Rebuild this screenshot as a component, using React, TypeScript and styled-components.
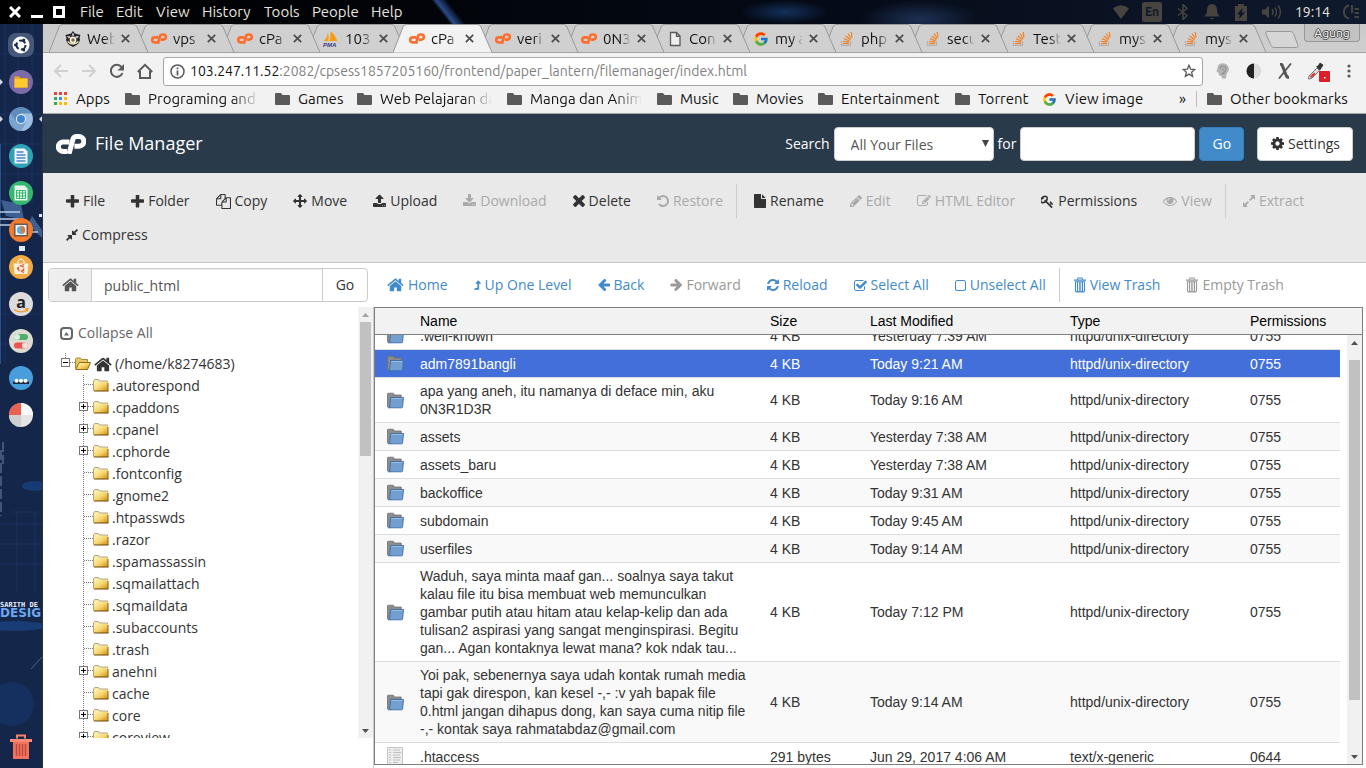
import React, { useLayoutEffect, useRef } from "react";
import styled, { createGlobalStyle, css } from "styled-components";
import { FcGoogle } from "react-icons/fc";

const system = `Ubuntu, "Noto Sans", "Open Sans", sans-serif`;
const panel = `"Open Sans", "Noto Sans", sans-serif`;
const grid = `"Liberation Sans", Arial, sans-serif`;

const GlobalStyle = createGlobalStyle`
  *, *::before, *::after { box-sizing: border-box; }
  html, body { margin: 0; height: 100%; overflow: hidden; }
  body { background: #fff; font: 14px/20px ${panel}; color: #333; }
  button, input, select { font: inherit; color: inherit; margin: 0; }
  button { background: none; border: 0; padding: 0; }
  a { color: inherit; text-decoration: none; }
  svg { display: block; flex: none; }
  #root { height: 100%; }
`;

/* ---------- Desktop shell ---------- */

const Desktop = styled.div`
  display: flex;
  flex-direction: column;
  height: 100vh;
`;

const MenuBar = styled.header`
  flex: none;
  display: flex;
  align-items: center;
  height: 24px;
  padding: 0 7px 0 9px;
  font: 15px/24px ${system};
  color: #e6e4df;
  background:
    linear-gradient(52deg, transparent 32%, #2b4b86 34%, #14264c 37%, transparent 39%) 380px 0 / 200px 24px no-repeat,
    radial-gradient(ellipse at 50% 80%, #1c3054 0, transparent 70%) 860px 0 / 120px 24px no-repeat,
    radial-gradient(ellipse at 50% 50%, #14305c 0, transparent 70%) 740px 0 / 90px 24px no-repeat,
    linear-gradient(90deg, #000 0, #020409 30%, #040a16 60%, #101a2e 100%);
`;

const WindowButtons = styled.div`
  display: flex;
  align-items: center;
  gap: 10px;
  margin-right: 15px;
`;

const MenuItem = styled.button<{ $w: number }>`
  width: ${(p) => p.$w}px;
  text-align: left;
  line-height: 24px;
  white-space: nowrap;
`;

const Tray = styled.div`
  display: flex;
  align-items: center;
  gap: 13px;
  margin-left: auto;
  color: #47443f;
`;

const Lang = styled.span`
  width: 20px;
  height: 20px;
  border-radius: 2px;
  background: #47443f;
  color: #101828;
  font: 700 12px/20px ${system};
  text-align: center;
`;

const Clock = styled.time`
  color: #e6e4df;
  font-size: 14px;
`;

const Workspace = styled.div`
  flex: 1;
  min-height: 0;
  display: flex;
`;

const Launcher = styled.nav`
  position: relative;
  flex: none;
  width: 43px;
  display: flex;
  flex-direction: column;
  align-items: center;
  justify-content: space-between;
  padding: 9px 1px 8px 0;
  background: #14264a;
  border-right: 1px solid #2c2e38;
`;

const Wallpaper = styled.svg`
  position: absolute;
  inset: 0;
`;

const LaunchList = styled.div`
  position: relative;
  display: flex;
  flex-direction: column;
  gap: 13px;
`;

const LaunchButton = styled.button`
  width: 24px;
  height: 24px;
`;

const TrashButton = styled.button`
  position: relative;
`;

/* ---------- Browser ---------- */

const Browser = styled.div`
  flex: 1;
  min-width: 0;
  display: flex;
  flex-direction: column;
`;

const TabStrip = styled.div`
  flex: none;
  display: flex;
  align-items: flex-start;
  height: 29px;
  padding-left: 6px;
  background: linear-gradient(#cacaca, #cfcfcf);
  border-bottom: 1px solid #a0a0a0;
  font: 15px/28px ${system};
  color: #111;
`;

const Tab = styled.div<{ $z: number }>`
  position: relative;
  z-index: ${(p) => p.$z};
  flex: none;
  width: 86px;
  height: 29px;
  display: flex;
  align-items: center;
  gap: 6px;
  padding-left: 16px;
`;

const TabShape = styled.svg`
  position: absolute;
  left: 0;
  top: 0;
  z-index: -1;
`;

const fade = css`
  overflow: hidden;
  white-space: nowrap;
  mask-image: linear-gradient(90deg, #000 60%, transparent);
`;

const TabTitle = styled.span`
  width: 28px;
  ${fade}
`;

const NewTab = styled.button`
  margin: 7px 0 0 12px;
`;

const ProfileButton = styled.button`
  margin: 0 6px 0 auto;
  width: 56px;
  height: 18px;
  border: 1px solid #999;
  border-top: 0;
  border-radius: 0 0 4px 4px;
  background: #c2c2c2;
  color: #fff;
  font: 12px/16px ${system};
  text-shadow: 1px 0 #444, -1px 0 #444, 0 1px #444, 0 -1px #444;
`;

const AddressRow = styled.div`
  flex: none;
  display: flex;
  align-items: center;
  height: 36px;
  padding: 0 13px 0 10px;
  background: #f2f2f2;
`;

const NavButtons = styled.div`
  display: flex;
  gap: 12px;
  margin-right: 10px;
`;

const AddressBox = styled.div`
  flex: 1;
  display: flex;
  align-items: center;
  gap: 5px;
  height: 29px;
  padding: 0 6px;
  background: #fff;
  border: 1px solid #a6a6a6;
  border-radius: 3px;
  font: 14px/26px ${system};
  color: #808080;
`;

const Address = styled.div`
  flex: 1;
  white-space: nowrap;
  overflow: hidden;
`;

const Host = styled.span`
  color: #111;
`;

const Extensions = styled.div`
  display: flex;
  align-items: center;
  gap: 15px;
  margin-left: 12px;
`;

const Bookmarks = styled.div`
  flex: none;
  display: flex;
  align-items: center;
  height: 25px;
  padding: 0 14px 4px 10px;
  background: #f2f2f2;
  border-bottom: 1px solid #a3a9ad;
  font: 15px/20px ${system};
  color: #111;
`;

const Bookmark = styled.a<{ $w: number; $fade?: boolean }>`
  display: flex;
  align-items: center;
  gap: 8px;
  width: ${(p) => p.$w}px;
  flex: none;
  white-space: nowrap;
  span {
    ${(p) => p.$fade && css`width: 112px; ${fade} mask-image: linear-gradient(90deg, #000 75%, transparent);`}
  }
`;

const BookmarkEnd = styled.div`
  display: flex;
  align-items: center;
  gap: 10px;
  margin-left: auto;
`;

const BookmarkDivider = styled.span`
  width: 1px;
  height: 16px;
  background: #bbb;
`;

/* ---------- File manager ---------- */

const Page = styled.main`
  flex: 1;
  min-height: 0;
  display: flex;
  flex-direction: column;
  background: #fff;
`;

const TopBar = styled.div`
  flex: none;
  display: flex;
  align-items: center;
  height: 59px;
  padding: 0 13px;
  background: #293a4a;
  color: #fff;
`;

const Title = styled.h1`
  margin: 0 auto 0 9px;
  padding-bottom: 2px;
  font: 400 18px/24px ${panel};
`;

const SearchForm = styled.form`
  display: flex;
  align-items: center;
  gap: 4px;
`;

const field = css`
  height: 34px;
  border: 1px solid #ccc;
  border-radius: 4px;
  background: #fff;
  color: #555;
  outline: 0;
`;

const SelectWrap = styled.span`
  display: grid;
  align-items: center;
  width: 160px;
  & > * { grid-area: 1 / 1; }
  & > svg { justify-self: end; margin-right: 5px; }
`;

const Select = styled.select`
  ${field}
  appearance: none;
  padding: 2px 15px 0 16px;
`;

const SearchInput = styled.input`
  ${field}
  width: 175px;
  padding: 6px 12px;
`;

const Button = styled.button<{ $primary?: boolean }>`
  height: 34px;
  padding: 0 12px;
  display: flex;
  align-items: center;
  gap: 4px;
  border: 1px solid ${(p) => (p.$primary ? "#357ebd" : "#ccc")};
  border-radius: 4px;
  background: ${(p) => (p.$primary ? "#428bca" : "#fff")};
  color: ${(p) => (p.$primary ? "#fff" : "#333")};
`;

const Settings = styled(Button)`
  margin-left: 13px;
  padding: 0 12px 0 13px;
`;

const ToolBar = styled.div`
  flex: none;
  display: flex;
  flex-wrap: wrap;
  padding: 11px 10px 10px;
  background: #e9e9e9;
  border-bottom: 1px solid #c3c3c8;
`;

const Tool = styled.button<{ $link?: boolean }>`
  display: flex;
  align-items: center;
  gap: 4px;
  height: 34px;
  padding: 0 13px;
  white-space: nowrap;
  color: ${(p) => (p.$link ? "#428bca" : "#333")};
  &:disabled { color: ${(p) => (p.$link ? "#999" : "#aaa")}; }
`;

const Divider = styled.span<{ $tight?: boolean }>`
  width: 1px;
  height: 34px;
  background: #ccc;
  margin-right: ${(p) => (p.$tight ? 1 : 4)}px;
`;

const PathRow = styled.div`
  flex: none;
  display: flex;
  padding: 5px 5px;
`;

const PathForm = styled.form`
  display: flex;
  width: 320px;
  margin-right: 6px;
  border: 1px solid #ccc;
  border-radius: 4px;
  overflow: hidden;
`;

const PathHome = styled.button`
  display: grid;
  place-items: center;
  width: 43px;
  background: #eee;
  border-right: 1px solid #ccc;
  color: #555;
`;

const PathInput = styled.input`
  flex: 1;
  min-width: 0;
  height: 32px;
  border: 0;
  outline: 0;
  padding: 1px 12px 0;
  color: #555;
  box-shadow: inset 0 1px 1px rgba(0, 0, 0, 0.08);
`;

const PathGo = styled.button`
  width: 45px;
  border-left: 1px solid #ccc;
`;

const Columns = styled.div`
  flex: 1;
  min-height: 0;
  display: flex;
`;

const TreePane = styled.aside`
  flex: none;
  display: flex;
  width: 330px;
  margin-bottom: 30px;
`;

const TreeScroll = styled.div`
  flex: 1;
  overflow: hidden;
  padding: 15px 0 0 17px;
`;

const Collapse = styled.button`
  display: flex;
  align-items: center;
  gap: 5px;
  height: 22px;
  margin-bottom: 9px;
  color: #666;
`;

const TreeRow = styled.div<{ $root?: boolean }>`
  display: flex;
  align-items: center;
  height: 22px;
  gap: 3px;
  padding-left: ${(p) => (p.$root ? 1 : 19)}px;
`;

const Bar = styled.div`
  flex: none;
  width: 15px;
  display: flex;
  flex-direction: column;
  align-items: center;
  background: #f1f1f1;
`;

const Track = styled.div<{ $pad: number }>`
  flex: 1;
  width: 11px;
  padding-top: ${(p) => p.$pad}px;
`;

const Thumb = styled.div`
  background: #c1c1c1;
`;

const ListPane = styled.section`
  flex: 1;
  min-width: 0;
  display: flex;
  padding: 0 3px 3px 0;
  border-left: 1px solid #ccc;
`;

const Frame = styled.div`
  flex: 1;
  min-width: 0;
  display: flex;
  flex-direction: column;
  border: 1px solid #7f7f7f;
  font: 14px/18px ${grid};
`;

const HeadArea = styled.div`
  flex: none;
  background: #f2f2f2;
  border-bottom: 1px solid #7f7f7f;
  color: #000;
`;

const BodyArea = styled.div`
  flex: 1;
  min-height: 0;
  display: flex;
`;

const BodyScroll = styled.div`
  flex: 1;
  min-width: 0;
  overflow: hidden;
  padding-right: 7px;
`;

const Table = styled.table`
  width: 100%;
  table-layout: fixed;
  border-collapse: separate;
  border-spacing: 0;
`;

const Th = styled.th`
  height: 26px;
  padding: 0 10px 0 5px;
  font-weight: 400;
  text-align: left;
`;

const Tr = styled.tr<{ $selected?: boolean; $shade?: boolean }>`
  background: ${(p) => (p.$selected ? "#426fd9" : p.$shade ? "#f9f9f9" : "#fff")};
  color: ${(p) => (p.$selected ? "#fff" : "#333")};
`;

const Td = styled.td`
  padding: 4px 10px 4px 5px;
  border-bottom: 1px solid #ddd;
  vertical-align: middle;
`;

const IconTd = styled(Td)`
  height: 28px;
  padding: 4px 0 4px 11px;
`;

/* ---------- Icons ---------- */

type Glyph = { box: string; w: number; h: number; d: string };

const glyphs: Record<string, Glyph> = {
  plus: { box: "192 192 1408 1408", w: 13, h: 13, d: "M1600 736v192q0 40-28 68t-68 28h-416v416q0 40-28 68t-68 28h-192q-40 0-68-28t-28-68v-416h-416q-40 0-68-28t-28-68v-192q0-40 28-68t68-28h416v-416q0-40 28-68t68-28h192q40 0 68 28t28 68v416h416q40 0 68 28t28 68z" },
  copy: { box: "0 0 1792 1792", w: 15, h: 15, d: "M1696 384q40 0 68 28t28 68v1216q0 40-28 68t-68 28h-960q-40 0-68-28t-28-68v-288h-544q-40 0-68-28t-28-68v-672q0-40 20-88t48-76l408-408q28-28 76-48t88-20h416q40 0 68 28t28 68v328q68-40 128-40h416zm-544 213l-299 299h299v-299zm-640-384l-299 299h299v-299zm196 647l316-316v-416h-384v416q0 40-28 68t-68 28h-416v640h512v-256q0-40 20-88t48-76zm956 804v-1152h-384v416q0 40-28 68t-68 28h-416v640h896z" },
  move: { box: "0 0 1792 1792", w: 14, h: 14, d: "M1792 896q0 26-19 45l-256 256q-19 19-45 19t-45-19-19-45v-128h-384v384h128q26 0 45 19t19 45-19 45l-256 256q-19 19-45 19t-45-19l-256-256q-19-19-19-45t19-45 45-19h128v-384h-384v128q0 26-19 45t-45 19-45-19l-256-256q-19-19-19-45t19-45l256-256q19-19 45-19t45 19 19 45v128h384v-384h-128q-26 0-45-19t-19-45 19-45l256-256q19-19 45-19t45 19l256 256q19 19 19 45t-19 45-45 19h-128v384h384v-128q0-26 19-45t45-19 45 19l256 256q19 19 19 45z" },
  upload: { box: "64 0 1664 1792", w: 13, h: 14, d: "M1344 1472q0-26-19-45t-45-19-45 19-19 45 19 45 45 19 45-19 19-45zm256 0q0-26-19-45t-45-19-45 19-19 45 19 45 45 19 45-19 19-45zm128-224v320q0 40-28 68t-68 28h-1472q-40 0-68-28t-28-68v-320q0-40 28-68t68-28h427q21 56 70.500 92t110.500 36h256q61 0 110.500-36t70.500-92h427q40 0 68 28t28 68zm-325-648q-17 40-59 40h-256v448q0 26-19 45t-45 19h-256q-26 0-45-19t-19-45v-448h-256q-42 0-59-40-17-39 14-69l448-448q18-19 45-19t45 19l448 448q31 30 14 69z" },
  download: { box: "64 0 1664 1792", w: 13, h: 14, d: "M1344 1344q0-26-19-45t-45-19-45 19-19 45 19 45 45 19 45-19 19-45zm256 0q0-26-19-45t-45-19-45 19-19 45 19 45 45 19 45-19 19-45zm128-224v320q0 40-28 68t-68 28h-1472q-40 0-68-28t-28-68v-320q0-40 28-68t68-28h465l135 136q58 56 136 56t136-56l136-136h464q40 0 68 28t28 68zm-325-569q17 41-14 70l-448 448q-18 19-45 19t-45-19l-448-448q-31-29-14-70 17-39 59-39h256v-448q0-26 19-45t45-19h256q26 0 45 19t19 45v448h256q42 0 59 39z" },
  times: { box: "302 366 1188 1188", w: 12, h: 12, d: "M1490 1322q0 40-28 68l-136 136q-28 28-68 28t-68-28l-294-294-294 294q-28 28-68 28t-68-28l-136-136q-28-28-28-68t28-68l294-294-294-294q-28-28-28-68t28-68l136-136q28-28 68-28t68 28l294 294 294-294q28-28 68-28t68 28l136 136q28 28 28 68t-28 68l-294 294 294 294q28 28 28 68z" },
  undo: { box: "128 128 1536 1536", w: 12, h: 12, d: "M1664 896q0 156-61 298t-164 245-245 164-298 61q-172 0-327-72.500t-264-204.500q-7-10-6.500-22.500t8.500-20.500l137-138q10-9 25-9 16 2 23 12 73 95 179 147t225 52q104 0 198.500-40.500t163.500-109.500 109.500-163.500 40.500-198.500-40.500-198.500-109.500-163.500-163.500-109.500-198.500-40.500q-98 0-188 35.500t-160 101.500l137 138q31 30 14 69-17 40-59 40h-448q-26 0-45-19t-19-45v-448q0-42 40-59 39-17 69 14l130 129q107-101 244.500-156.500t284.500-55.500q156 0 298 61t245 164 164 245 61 298z" },
  file: { box: "128 0 1536 1792", w: 12, h: 14, d: "M1152 512v-472q22 14 36 28l408 408q14 14 28 36h-472zm-128 32q0 40 28 68t68 28h544v1056q0 40-28 68t-68 28h-1344q-40 0-68-28t-28-68v-1600q0-40 28-68t68-28h800v544z" },
  pencil: { box: "128 128 1536 1536", w: 12, h: 12, d: "M491 1536l91-91-235-235-91 91v107h128v128h107zm523-928q0-22-22-22-10 0-17 7l-542 542q-7 7-7 17 0 22 22 22 10 0 17-7l542-542q7-7 7-17zm-54-192l416 416-832 832h-416v-416zm683 96q0 53-37 90l-166 166-416-416 166-165q36-38 90-38 53 0 91 38l235 234q37 39 37 91z" },
  edit: { box: "0 0 1792 1792", w: 14, h: 14, d: "M888 1184l116-116-152-152-116 116v56h96v96h56zm440-720q-16-16-33 1l-350 350q-17 17-1 33t33-1l350-350q17-17 1-33zm80 594v190q0 119-84.500 203.500t-203.500 84.500h-832q-119 0-203.500-84.500t-84.500-203.500v-832q0-119 84.500-203.500t203.500-84.500h832q63 0 117 25 15 7 18 23 3 17-9 29l-49 49q-14 14-32 8-23-6-45-6h-832q-66 0-113 47t-47 113v832q0 66 47 113t113 47h832q66 0 113-47t47-113v-126q0-13 9-22l64-64q15-15 35-7t20 29zm-96-738l288 288-672 672h-288v-288zm444 132l-92 92-288-288 92-92q28-28 68-28t68 28l152 152q28 28 28 68t-28 68z" },
  key: { box: "128 64 1664 1664", w: 13, h: 13, d: "M832 512q0-80-56-136t-136-56-136 56-56 136q0 42 19 83-41-19-83-19-80 0-136 56t-56 136 56 136 136 56 136-56 56-136q0-42-19-83 41 19 83 19 80 0 136-56t56-136zm851 704q0 17-49 66t-66 49q-9 0-28.500-16t-36.500-33-38.500-40-24.500-26l-96 96 220 220q28 28 28 68 0 42-39 81t-81 39q-40 0-68-28l-671-671q-176 131-365 131-163 0-265.500-102.500t-102.500-265.500q0-160 95-313t248-248 313-95q163 0 265.500 102.500t102.500 265.500q0 189-131 365l355 355 96-96q-3-3-26-24.500t-40-38.500-33-36.500-16-28.500q0-17 49-66t66-49q13 0 23 10 6 6 46 44.500t82 79.500 86.500 86 73 78 28.500 41z" },
  eye: { box: "0 0 1792 1792", w: 14, h: 14, d: "M1664 960q-152-236-381-353 61 104 61 225 0 185-131.500 316.500t-316.500 131.500-316.500-131.500-131.500-316.500q0-121 61-225-229 117-381 353 133 205 333.500 326.500t434.500 121.500 434.500-121.500 333.500-326.500zm-720-384q0-20-14-34t-34-14q-125 0-214.500 89.500t-89.500 214.500q0 20 14 34t34 14 34-14 14-34q0-86 61-147t147-61q20 0 34-14t14-34zm848 384q0 34-20 69-140 230-376.500 368.500t-499.500 138.500-499.500-139-376.500-368q-20-35-20-69t20-69q140-229 376.500-368t499.500-139 499.500 139 376.500 368q20 35 20 69z" },
  expand: { box: "128 128 1536 1536", w: 12, h: 12, d: "M883 1056q0 13-10 23l-332 332 144 144q19 19 19 45t-19 45-45 19h-448q-26 0-45-19t-19-45v-448q0-26 19-45t45-19 45 19l144 144 332-332q10-10 23-10t23 10l114 114q10 10 10 23zm781-864v448q0 26-19 45t-45 19-45-19l-144-144-332 332q-10 10-23 10t-23-10l-114-114q-10-10-10-23t10-23l332-332-144-144q-19-19-19-45t19-45 45-19h448q26 0 45 19t19 45z" },
  compress: { box: "128 128 1536 1536", w: 12, h: 12, d: "M896 960v448q0 26-19 45t-45 19-45-19l-144-144-332 332q-10 10-23 10t-23-10l-114-114q-10-10-10-23t10-23l332-332-144-144q-19-19-19-45t19-45 45-19h448q26 0 45 19t19 45zm755-672q0 13-10 23l-332 332 144 144q19 19 19 45t-19 45-45 19h-448q-26 0-45-19t-19-45v-448q0-26 19-45t45-19 45 19l144 144 332-332q10-10 23-10t23 10l114 114q10 10 10 23z" },
  home: { box: "64 192 1664 1408", w: 17, h: 14, d: "M1472 992v480q0 26-19 45t-45 19h-384v-384h-256v384h-384q-26 0-45-19t-19-45v-480q0-1 .5-3t.5-3l575-474 575 474q1 2 1 6zm223-69l-62 74q-8 9-21 11h-3q-13 0-21-7l-692-577-692 577q-12 8-24 7-13-2-21-11l-62-74q-8-10-7-23.500t11-21.500l719-599q32-26 76-26t76 26l244 204v-195q0-14 9-23t23-9h192q14 0 23 9t9 23v408l219 182q10 8 11 21.500t-7 23.500z" },
  levelUp: { box: "300 160 1024 1424", w: 7, h: 12, d: "M1299 653q-19 35-57 35h-192v864q0 14-9 23t-23 9h-704q-21 0-29-18-8-20 4-35l160-192q9-11 25-11h320v-640h-192q-40 0-58-37-17-37 9-68l320-384q18-22 49-22t49 22l320 384q27 32 8 70z" },
  arrowLeft: { box: "128 192 1536 1536", w: 12, h: 12, d: "M1664 896v128q0 53-32.500 90.500t-84.500 37.500h-704l293 294q38 36 38 90t-38 90l-75 76q-37 37-90 37-52 0-91-37l-651-652q-37-37-37-90 0-52 37-91l651-650q38-38 91-38 52 0 90 38l75 74q38 38 38 91t-38 91l-293 293h704q52 0 84.500 37.500t32.500 90.500z" },
  arrowRight: { box: "64 192 1536 1536", w: 12, h: 12, d: "M1600 960q0 54-37 91l-651 651q-39 37-91 37-51 0-90-37l-75-75q-38-38-38-91t38-91l293-293h-704q-52 0-84.500-37.500t-32.500-90.500v-128q0-53 32.500-90.500t84.500-37.500h704l-293-294q-38-36-38-90t38-90l75-75q38-38 90-38 53 0 91 38l651 651q37 35 37 90z" },
  refresh: { box: "128 128 1536 1536", w: 12, h: 12, d: "M1639 1056q0 5-1 7-64 268-268 434.500t-478 166.500q-146 0-282.500-55t-243.500-157l-129 129q-19 19-45 19t-45-19-19-45v-448q0-26 19-45t45-19h448q26 0 45 19t19 45-19 45l-137 137q71 66 161 102t187 36q134 0 250-65t186-179q11-17 53-117 8-23 30-23h192q13 0 22.500 9.500t9.500 22.500zm25-800v448q0 26-19 45t-45 19h-448q-26 0-45-19t-19-45 19-45l138-138q-148-137-349-137-134 0-250 65t-186 179q-11 17-53 117-8 23-30 23h-199q-13 0-22.500-9.500t-9.500-22.500v-7q65-268 270-434.500t480-166.500q146 0 284 55.500t245 156.500l130-129q19-19 45-19t45 19 19 45z" },
  check: { box: "64 0 1664 1664", w: 13, h: 13, d: "M1472 930v318q0 119-84.500 203.500t-203.500 84.500h-832q-119 0-203.500-84.500t-84.500-203.500v-832q0-119 84.500-203.500t203.500-84.500h832q63 0 117 25 15 7 18 23 3 17-9 29l-49 49q-10 10-23 10-3 0-9-2-23-6-45-6h-832q-66 0-113 47t-47 113v832q0 66 47 113t113 47h832q66 0 113-47t47-113v-254q0-13 9-22l64-64q10-10 23-10 6 0 12 3 20 8 20 29zm231-489l-814 814q-24 24-57 24t-57-24l-430-430q-24-24-24-57t24-57l110-110q24-24 57-24t57 24l263 263 647-647q24-24 57-24t57 24l110 110q24 24 24 57t-24 57z" },
  square: { box: "0 0 11 11", w: 11, h: 11, d: "M2.500 0h6A2.500 2.500 0 0 1 11 2.500v6A2.500 2.500 0 0 1 8.500 11h-6A2.500 2.500 0 0 1 0 8.500v-6A2.500 2.500 0 0 1 2.500 0zM2.400 1A1.400 1.400 0 0 0 1 2.400v6.200A1.400 1.400 0 0 0 2.400 10h6.200A1.400 1.400 0 0 0 10 8.600V2.400A1.400 1.400 0 0 0 8.600 1z" },
  cog: { box: "128 128 1536 1536", w: 13, h: 13, d: "M1152 896q0-106-75-181t-181-75-181 75-75 181 75 181 181 75 181-75 75-181zm512-109v222q0 12-8 23t-20 13l-185 28q-19 54-39 91 35 50 107 138 10 12 10 25t-9 23q-27 37-99 108t-94 71q-12 0-26-9l-138-108q-44 23-91 38-16 136-29 186-7 28-36 28h-222q-14 0-24.500-8.500t-11.500-21.500l-28-184q-49-16-90-37l-141 107q-10 9-25 9-14 0-25-11-126-114-165-168-7-10-7-23 0-12 8-23 15-21 51-66.500t54-70.500q-27-50-41-99l-183-27q-13-2-21-12.500t-8-23.500v-222q0-12 8-23t19-13l186-28q14-46 39-92-40-57-107-138-10-12-10-24 0-10 9-23 26-36 98.500-107.500t94.500-71.500q13 0 26 10l138 107q44-23 91-38 16-136 29-186 7-28 36-28h222q14 0 24.500 8.500t11.500 21.500l28 184q49 16 90 37l142-107q9-9 24-9 13 0 25 10 129 119 165 170 7 8 7 22 0 12-8 23-15 21-51 66.500t-54 70.500q26 50 41 98l183 28q13 2 21 12.500t8 23.500z" },
  trash: { box: "0 0 13 16", w: 12, h: 16, d: "M3.500 0h6v2H13v1.300H0V2h3.500zM4.500 1v1h4V1zM1 4h11v10.500q0 1.500-1.500 1.500h-8Q1 16 1 14.500zM2.200 5v9.800h1V5zM4.500 5v9.800h1.200V5zM7.200 5v9.800h1.200V5zM9.800 5v9.800h1V5z" },
};

const Icon = ({ name, w, h }: { name: string; w?: number; h?: number }) => {
  const g = glyphs[name];
  return (
    <svg width={w ?? g.w} height={h ?? g.h} viewBox={g.box} fill="currentColor" fillRule="evenodd" aria-hidden="true">
      <path d={g.d} />
    </svg>
  );
};

const CpLogo = ({ width, height, color }: { width: number; height: number; color: string }) => (
  <svg width={width} height={height} viewBox="0 0 30 20" fill="none" stroke={color} strokeWidth="5" aria-hidden="true">
    <path d="M13.500 8H7.200a4.700 4.700 0 0 0-.4 9.400H11" />
    <path d="M13 20L16.800 5.700Q17.600 2.500 20.600 2.500H23a4.600 4.600 0 0 1 0 9.700H18.400" />
  </svg>
);

const Favicon = ({ kind }: { kind: string }) => {
  if (kind === "google") return <FcGoogle size={16} />;
  if (kind === "cp") return <CpLogo width={16} height={11} color="#ff6c2c" />;
  if (kind === "pma")
    return (
      <svg width="16" height="16" viewBox="0 0 16 16">
        <path d="M1 10Q4 7 5 2Q6 6 5.500 10z" fill="#f90" />
        <path d="M6.500 10Q8 5 7.500 0Q13 5 14 10z" fill="#f89c0e" />
        <text x="0" y="15.500" fontSize="6" fontWeight="700" fontStyle="italic" fontFamily="Liberation Sans" fill="#3b3c7d">PMA</text>
      </svg>
    );
  if (kind === "page")
    return (
      <svg width="16" height="16" viewBox="0 0 16 16" fill="#eee" stroke="#5a5a5a" strokeWidth="1.300">
        <path d="M3.500 1.500h6l3.500 3.500v9.500h-9.500zM9.500 1.500v3.800h3.500" />
      </svg>
    );
  if (kind === "crest")
    return (
      <svg width="16" height="16" viewBox="0 0 16 16">
        <path d="M8 0l2 2.500 5.500 1.500-1 3 .5 1.500q-.5 5-7 7.500-6.500-2.500-7-7.500L1.500 7l-1-3L6 2.500z" fill="#26272b" />
        <path d="M8 1.500l1.200 3H6.800zM2 5l3.500.5L4 7.500zM14 5l-3.500.5L12 7.500z" fill="#f4f1e4" />
        <circle cx="8" cy="9" r="3.400" fill="#f4f1e4" />
        <circle cx="8" cy="9" r="1.700" fill="#7d6a35" />
        <path d="M2.500 10.500q5.500 5 11 0" stroke="#f4e9b0" fill="none" strokeWidth="1.400" />
      </svg>
    );
  return (
    <svg width="16" height="16" viewBox="0 0 16 16" fill="none">
      <path d="M2.500 10v4.500h9V10" stroke="#aeb1b5" strokeWidth="1.200" />
      <path d="M4 12.600h6M4.200 10.300l6 .9M5 7.600l5.500 2.400M6.700 5l4.800 3.800M9 2.500l3.200 5M12.200 1l.8 5.500" stroke="#f48024" strokeWidth="1.200" />
    </svg>
  );
};

const CloseX = () => (
  <svg width="9" height="9" viewBox="0 0 9 9" stroke="#4c4c4c" strokeWidth="1.700">
    <path d="M.8.8l7.400 7.400M8.200.8L.8 8.200" />
  </svg>
);

const GreyFolder = () => (
  <svg width="15" height="12" viewBox="0 0 15 12" fill="#5a5a5a">
    <path d="M1 0h5l1.500 2H14q1 0 1 1v8q0 1-1 1H1q-1 0-1-1V1q0-1 1-1z" />
  </svg>
);

const YellowFolder = ({ open }: { open?: boolean }) => (
  <svg width="16" height="14" viewBox="0 0 16 14">
    <defs>
      <linearGradient id="gold" x1="0" y1="0" x2="1" y2="1">
        <stop offset="0" stopColor="#fff6b8" />
        <stop offset=".5" stopColor="#f6d571" />
        <stop offset="1" stopColor="#d08a0c" />
      </linearGradient>
    </defs>
    {open ? (
      <>
        <path d="M.5 11.500V2l1-1h4l1 1.500h6v3" fill="#e9c866" stroke="#a88a3c" />
        <path d="M.8 12.500L4 5.500h11.500l-3 7z" fill="url(#gold)" stroke="#8f6c16" />
      </>
    ) : (
      <>
        <path d="M.5 11.500V2l1-1.500h4L6.500 2h8v9.500z" fill="#f8eab0" stroke="#b5a578" />
        <path d="M1 3h14v9H1z" fill="url(#gold)" />
        <path d="M1 12h14.500" stroke="#6b4808" /><path d="M15 12V4" stroke="#8a5f10" />
      </>
    )}
  </svg>
);

const BlueFolder = () => (
  <svg width="18" height="17" viewBox="0 0 18 17">
    <path d="M1.500 15V2q0-.8.8-.8h5l1 1.800h6.900v5L5 15.500z" fill="#8c8c8c" stroke="#6f6f6f" strokeWidth=".8" />
    <path d="M4.700 5.500h12.800l-.9 9.300q-.1 1-1 1H2.500q1-.2 1.100-1.200z" fill="#729fcf" stroke="#3a6cab" strokeWidth=".9" />
    <path d="M5.300 6.500h11.200" stroke="#9dbde0" />
  </svg>
);

const TextFile = () => (
  <svg width="18" height="19" viewBox="0 0 18 19">
    <path d="M1.500.5h15v18h-15z" fill="#ededed" stroke="#c4c4c4" />
    <path d="M3 3h2M7 3h7M3 5.500h2M7 5.500h8M3 8h2M7 8h7M3 10.500h2M7 10.500h8M3 13h2M7 13h7M3 15.500h2M7 15.500h5" stroke="#c0c0c0" />
  </svg>
);

const Branch = ({ mark, root }: { mark?: "+" | "-"; root?: boolean }) => (
  <svg width="11" height="22" viewBox="0 0 11 22" fill="none" stroke="#777" shapeRendering="crispEdges" overflow="visible">
    <path d={root ? "M4.500 0v5" : "M4.500 0v22"} strokeDasharray="1 1" />
    <path d="M4.500 9.500h9" strokeDasharray="1 1" />
    {mark && <rect x=".5" y="5.500" width="8" height="8" fill="#fff" />}
    {mark && <path d={mark === "+" ? "M2 9.500h5M4.500 7v5" : "M2 9.500h5"} stroke="#000" />}
  </svg>
);

const Arrow = ({ up, color }: { up?: boolean; color: string }) => (
  <svg width="15" height="15" viewBox="0 0 15 15" fill={color}>
    <path d={up ? "M4 10h7L7.500 6z" : "M4 6h7l-3.500 4z"} />
  </svg>
);

/* ---------- Desktop data ---------- */

const menus: [string, number][] = [
  ["File", 36], ["Edit", 40], ["View", 46], ["History", 62], ["Tools", 48], ["People", 59], ["Help", 34],
];

const TrayIcons = () => (
  <>
    <svg width="16" height="14" viewBox="0 0 16 14" fill="currentColor"><path d="M8 14L0 3.500Q8-3 16 3.500z" /></svg>
    <Lang>En</Lang>
    <svg width="16" height="16" viewBox="0 0 16 16" fill="none" stroke="currentColor" strokeWidth="1.500"><path d="M3 4.500l9 7-4 4V.500l4 4-9 7" /></svg>
    <svg width="16" height="16" viewBox="0 0 16 16" fill="currentColor"><path d="M8 0q5 .5 5 6 0 4 3 6.500H0Q3 10 3 6q0-5.500 5-6zM6 14h4q-2 3-4 0z" /></svg>
    <svg width="16" height="17" viewBox="0 0 16 17" fill="currentColor" fillRule="evenodd"><path d="M5 0h6v2h3v15H2V2h3zM9.500 4L4 10.500h3L6 15l6-6.500H9z" /></svg>
    <svg width="20" height="14" viewBox="0 0 20 14" fill="currentColor"><path d="M0 4.500h3l4-4v13l-4-4H0z" /><path d="M10 4q2 3 0 6M13 2.500q3 4.500 0 9M16 .500q5 6.500 0 13" fill="none" stroke="currentColor" strokeWidth="1.500" /></svg>
  </>
);

const launcherIcons: React.ReactNode[] = [
  <>
    <rect x="-1" y="0" width="26" height="24" rx="8" fill="#6d7f9c" opacity=".55" />
    <circle cx="12" cy="12" r="8.500" fill="#fff" />
    <circle cx="12" cy="12" r="4.500" fill="none" stroke="#1c2b4a" strokeWidth="2" strokeDasharray="7 2.400" />
    <circle cx="6.500" cy="12" r="1.500" fill="#1c2b4a" /><circle cx="14.800" cy="7" r="1.500" fill="#1c2b4a" /><circle cx="14.800" cy="17" r="1.500" fill="#1c2b4a" />
  </>,
  <>
    <circle cx="12" cy="12" r="12" fill="#7b6ba6" />
    <path d="M5.500 6.500H10l1.500 1.500h7v9.500h-13z" fill="#f0a51e" /><path d="M5.500 9h13v8.500h-13z" fill="#ffcb2f" />
  </>,
  <>
    <circle cx="12" cy="12" r="12" fill="#5f8cbb" />
    <path d="M12 6.500h10.500A12 12 0 0 1 12 24l4.800-9z" fill="#9dbfe2" /><path d="M1.700 6A12 12 0 0 0 12 24l4.500-9-9-.5z" fill="#7ba3cf" />
    <circle cx="12" cy="12" r="5" fill="#f3f7fb" /><circle cx="12" cy="12" r="4" fill="#3f83d6" />
  </>,
  <>
    <circle cx="12" cy="12" r="12" fill="#2fa3b6" />
    <path d="M5.500 4.500h10l3 3v12h-13z" fill="#f2f6fb" />
    <path d="M7.500 8h7M7.500 11h9M7.500 14h9M7.500 17h9" stroke="#4a86cf" strokeWidth="1.500" />
  </>,
  <>
    <circle cx="12" cy="12" r="12" fill="#34b871" />
    <path d="M5.500 4.500h10l3 3v12h-13z" fill="#e9f7ee" />
    <path d="M7.500 9.500h9v8h-9zM7.500 12h9M7.500 15h9M10.500 9.500v8M13.500 9.500v8" stroke="#34b871" fill="none" />
  </>,
  <>
    <circle cx="12" cy="12" r="12" fill="#f47b2c" />
    <path d="M5 5.500h14v13H5z" fill="#6a5a55" /><path d="M6.500 7h11v10h-11z" fill="#f3efe9" />
    <circle cx="12" cy="12" r="4" fill="#58b3dc" /><path d="M12 8a4 4 0 0 1 1 7.900L12 12z" fill="#e8743b" />
  </>,
  <>
    <circle cx="12" cy="12" r="12" fill="#f2aa45" />
    <path d="M9 8.500V6q3-4 6 0v2.500" fill="none" stroke="#fff" /><path d="M4.500 8.500h15l-1 10.500h-13z" fill="#fbefdc" />
    <circle cx="12" cy="13.500" r="2.800" fill="none" stroke="#e4572e" strokeWidth="1.500" strokeDasharray="4.400 1.400" />
    <path d="M8 13.500h1M14 10l.5-.8M14 17l.5.8" stroke="#e4572e" strokeWidth="1.600" />
  </>,
  <>
    <circle cx="12" cy="12" r="12" fill="#dcdcde" />
    <text x="12" y="16" textAnchor="middle" fontFamily="Noto Sans" fontWeight="700" fontSize="16" fill="#222">a</text>
    <path d="M5 17.500q7 4.500 13.500.5M16 17l3-.3-.8 2.800" fill="none" stroke="#f59b20" strokeWidth="1.400" />
  </>,
  <>
    <circle cx="12" cy="12" r="12" fill="#dedcd0" />
    <rect x="5" y="5" width="14" height="6" rx="3" fill="#4fae6c" /><circle cx="8" cy="8" r="3" fill="#d7efdd" />
    <rect x="5" y="13.500" width="14" height="6" rx="3" fill="#ee5350" /><circle cx="16" cy="16.500" r="3" fill="#fbdcdc" />
  </>,
  <>
    <circle cx="12" cy="12" r="12" fill="#489ddc" />
    <path d="M4 15.500h16v2.500H4z" fill="#1c2a3c" />
    <circle cx="7.500" cy="14.800" r="2" fill="#fff" /><circle cx="12" cy="14.800" r="2" fill="#fff" /><circle cx="16.500" cy="14.800" r="2" fill="#fff" />
  </>,
  <>
    <circle cx="12" cy="12" r="12" fill="#e4e4e4" />
    <path d="M12 12V0A12 12 0 0 0 0 12z" fill="#ea6153" /><path d="M12 12V0a12 12 0 0 1 12 12z" fill="#fafafa" /><path d="M12 12v12A12 12 0 0 1 0 12z" fill="#cfcfcf" />
  </>,
];

const launcherNames = ["Dash", "Files", "Chromium", "Writer", "Calc", "Impress", "Software", "Amazon", "Settings", "Dock", "Disk usage"];

const tabs: [string, string][] = [
  ["crest", "Web"], ["cp", "vps"], ["cp", "cPa"], ["pma", "103"], ["cp", "cPa"], ["cp", "veri"], ["cp", "0N3"],
  ["page", "Con"], ["google", "my a"], ["so", "php"], ["so", "secu"], ["so", "Test"], ["so", "mys"], ["so", "mys"],
];

const bookmarks: [string, number, boolean?][] = [
  ["Programing and", 150, true], ["Games", 82], ["Web Pelajaran da", 150, true], ["Manga dan Anim", 150, true],
  ["Music", 76], ["Movies", 85], ["Entertainment", 137], ["Torrent", 87],
];

/* ---------- File manager data ---------- */

type ToolItem = { icon: string; label: string; off?: boolean } | null;

const tools: ToolItem[] = [
  { icon: "plus", label: "File" },
  { icon: "plus", label: "Folder" },
  { icon: "copy", label: "Copy" },
  { icon: "move", label: "Move" },
  { icon: "upload", label: "Upload" },
  { icon: "download", label: "Download", off: true },
  { icon: "times", label: "Delete" },
  { icon: "undo", label: "Restore", off: true },
  null,
  { icon: "file", label: "Rename" },
  { icon: "pencil", label: "Edit", off: true },
  { icon: "edit", label: "HTML Editor", off: true },
  { icon: "key", label: "Permissions" },
  { icon: "eye", label: "View", off: true },
  null,
  { icon: "expand", label: "Extract", off: true },
  { icon: "compress", label: "Compress" },
];

const actions: ToolItem[] = [
  { icon: "home", label: "Home" },
  { icon: "levelUp", label: "Up One Level" },
  { icon: "arrowLeft", label: "Back" },
  { icon: "arrowRight", label: "Forward", off: true },
  { icon: "refresh", label: "Reload" },
  { icon: "check", label: "Select All" },
  { icon: "square", label: "Unselect All" },
  null,
  { icon: "trash", label: "View Trash" },
  { icon: "trash", label: "Empty Trash", off: true },
];

const tree: [string, boolean?][] = [
  [".autorespond"], [".cpaddons", true], [".cpanel", true], [".cphorde", true], [".fontconfig"], [".gnome2"],
  [".htpasswds"], [".razor"], [".spamassassin"], [".sqmailattach"], [".sqmaildata"], [".subaccounts"], [".trash"],
  ["anehni", true], ["cache"], ["core", true], ["coreview", true],
];

const dir = "httpd/unix-directory";
const files: [string, string, string, string, string][] = [
  [".well-known", "4 KB", "Yesterday 7:39 AM", dir, "0755"],
  ["adm7891bangli", "4 KB", "Today 9:21 AM", dir, "0755"],
  ["apa yang aneh, itu namanya di deface min, aku 0N3R1D3R", "4 KB", "Today 9:16 AM", dir, "0755"],
  ["assets", "4 KB", "Yesterday 7:38 AM", dir, "0755"],
  ["assets_baru", "4 KB", "Yesterday 7:38 AM", dir, "0755"],
  ["backoffice", "4 KB", "Today 9:31 AM", dir, "0755"],
  ["subdomain", "4 KB", "Today 9:45 AM", dir, "0755"],
  ["userfiles", "4 KB", "Today 9:14 AM", dir, "0755"],
  ["Waduh, saya minta maaf gan... soalnya saya takut kalau file itu bisa membuat web memunculkan gambar putih atau hitam atau kelap-kelip dan ada tulisan2 aspirasi yang sangat menginspirasi. Begitu gan... Agan kontaknya lewat mana? kok ndak tau...", "4 KB", "Today 7:12 PM", dir, "0755"],
  ["Yoi pak, sebenernya saya udah kontak rumah media tapi gak direspon, kan kesel -,- :v yah bapak file 0.html jangan dihapus dong, kan saya cuma nitip file -,- kontak saya rahmatabdaz@gmail.com", "4 KB", "Today 9:14 AM", dir, "0755"],
  [".htaccess", "291 bytes", "Jun 29, 2017 4:06 AM", "text/x-generic", "0644"],
];

const FileCols = () => (
  <colgroup>
    <col width="40" /><col width="350" /><col width="100" /><col width="200" /><col width="180" /><col />
  </colgroup>
);

const renderTools = (items: ToolItem[], link?: boolean) =>
  items.map((t, i) =>
    t ? (
      <Tool key={i} $link={link} disabled={t.off}>
        <Icon name={t.icon} />
        {t.label}
      </Tool>
    ) : (
      <Divider key={i} $tight={link} />
    )
  );

const FileList = () => {
  const body = useRef<HTMLDivElement>(null);
  useLayoutEffect(() => {
    if (body.current) body.current.scrollTop = 13;
  }, []);
  return (
    <ListPane>
      <Frame>
        <HeadArea>
          <Table>
            <FileCols />
            <thead>
              <tr>
                <Th aria-label="Kind" />
                {["Name", "Size", "Last Modified", "Type", "Permissions"].map((h) => <Th key={h}>{h}</Th>)}
              </tr>
            </thead>
          </Table>
        </HeadArea>
        <BodyArea>
          <BodyScroll ref={body}>
            <Table>
              <FileCols />
              <tbody>
                {files.map((row, i) => (
                  <Tr key={row[0]} $selected={i === 1} $shade={i % 2 === 1}>
                    <IconTd>{row[3] === dir ? <BlueFolder /> : <TextFile />}</IconTd>
                    {row.map((cell, j) => <Td key={j}>{cell}</Td>)}
                  </Tr>
                ))}
              </tbody>
            </Table>
          </BodyScroll>
          <Bar>
            <Arrow up color="#505050" />
            <Track $pad={10}><Thumb style={{ height: "87.5%" }} /></Track>
            <Arrow color="#505050" />
          </Bar>
        </BodyArea>
      </Frame>
    </ListPane>
  );
};

const FileTree = () => (
  <TreePane>
    <TreeScroll>
      <Collapse>
        <svg width="13" height="13" viewBox="0 0 13 13" fill="none" stroke="#666" strokeWidth="2">
          <rect x="1" y="1" width="11" height="11" rx="3" />
          <path d="M4 8.500h5L6.500 5z" fill="#666" stroke="none" />
        </svg>
        Collapse All
      </Collapse>
      <TreeRow $root>
        <Branch mark="-" root />
        <YellowFolder open />
        <Icon name="home" w={18} h={15} />
        (/home/k8274683)
      </TreeRow>
      {tree.map(([name, more]) => (
        <TreeRow key={name}>
          <Branch mark={more ? "+" : undefined} />
          <YellowFolder />
          {name}
        </TreeRow>
      ))}
    </TreeScroll>
    <Bar>
      <Arrow up color="#a3a3a3" />
      <Track $pad={0}><Thumb style={{ height: "33.5%" }} /></Track>
      <Arrow color="#505050" />
    </Bar>
  </TreePane>
);

export default function App() {
  return (
    <Desktop>
      <GlobalStyle />
      <MenuBar>
        <WindowButtons>
          <button aria-label="Close"><svg width="12" height="12" viewBox="0 0 12 12" stroke="#fff" strokeWidth="3"><path d="M1 1l10 10M11 1L1 11" /></svg></button>
          <button aria-label="Minimize"><svg width="12" height="12" viewBox="0 0 12 12" fill="#fff"><path d="M0 9h12v3H0z" /></svg></button>
          <button aria-label="Maximize"><svg width="12" height="12" viewBox="0 0 12 12" fill="none" stroke="#fff" strokeWidth="3"><path d="M1.500 1.500h9v9h-9z" /></svg></button>
        </WindowButtons>
        {menus.map(([m, w]) => <MenuItem key={m} $w={w}>{m}</MenuItem>)}
        <Tray>
          <TrayIcons />
          <Clock>19:14</Clock>
          <svg width="16" height="16" viewBox="0 0 16 16" fill="none" stroke="currentColor" strokeWidth="2"><path d="M6 1.500a6.700 6.700 0 0 0 0 13M9 1v8M11.500 5H16M11.500 9H16M11.500 13H16" /></svg>
        </Tray>
      </MenuBar>
      <Workspace>
        <Launcher>
          <Wallpaper width="42" height="744" viewBox="0 0 42 744" aria-hidden="true">
            <g stroke="#1f3b6b" strokeWidth=".6">
              <path d="M0 30h42M0 60h42M0 90h42M0 120h42M0 150h42M0 290h42M0 320h42M5 0v340M18 0v180M32 0v180M12 488h25M0 500h42M0 520h42M0 540h42M17 488v80M35 488v80" />
            </g>
            <path d="M0 340V120" stroke="#27508c" strokeWidth="2" />
            <path d="M1 176l20 4 3 16-18-4zM32 192l10 14v8l-14-14zM17 166l5 8-5 2z" fill="#3e5f92" />
            <path d="M0 188h20M0 195h18M0 201h30M20 208h18" stroke="#b9c9e6" strokeWidth="1.300" />
            <path d="M19 222h6v5h-6zM39 190h3v3h-3z" fill="#dce8fb" />
            <path d="M1 426v66M3 418v22" stroke="#51648a" strokeWidth="1.500" strokeDasharray="10 3" />
            <ellipse cx="34" cy="462" rx="12" ry="5" fill="#1a4384" opacity=".7" />
            <ellipse cx="14" cy="602" rx="32" ry="5" fill="#1b468a" opacity=".7" />
            <ellipse cx="12" cy="680" rx="22" ry="22" fill="#17417e" opacity=".4" />
            <path d="M31 645l11-12" stroke="#52668c" />
            <path d="M0 55l3 3-3 3zM0 92l3 3-3 3zM42 92l-3 3 3 3z" fill="#d6dbe5" />
            <text x="0" y="583" fontSize="7" fontWeight="700" fontFamily="DejaVu Sans Mono" fill="#eaf0fb">SARITH DE</text>
            <text x="0" y="593" fontSize="12" fontWeight="700" fontFamily="DejaVu Sans" fill="#6ea6ef">DESIG</text>
          </Wallpaper>
          <LaunchList>
            {launcherIcons.map((art, i) => (
              <LaunchButton key={i} aria-label={launcherNames[i]}>
                <svg width="24" height="24" viewBox="0 0 24 24" overflow="visible">{art}</svg>
              </LaunchButton>
            ))}
          </LaunchList>
          <TrashButton aria-label="Trash">
            <svg width="22" height="26" viewBox="0 0 22 26">
              <path d="M7 4.500V1.500h8v3" fill="none" stroke="#f5816d" strokeWidth="2" />
              <path d="M0 5h22v3H0z" fill="#ff8a75" /><path d="M3 8h16v17H3z" fill="#f5725d" />
              <path d="M6.500 10v12M9.500 10v12M12.500 10v12M15.500 10v12" stroke="#b94a3c" strokeWidth="1.400" />
            </svg>
          </TrashButton>
        </Launcher>
        <Browser>
          <TabStrip>
            {tabs.map(([kind, title], i) => {
              const active = i === 4;
              return (
                <Tab key={i} $z={active ? 30 : 20 - i}>
                  <TabShape width="100" height="29" viewBox="0 0 100 29" aria-hidden="true">
                    <path d="M0 28.500L10 3Q11 .5 13 .5H85Q87 .5 88 3L99 28.500z" fill={active ? "#f2f2f2" : "#d0d0d0"} />
                    <path d="M0 28.500L10 3Q11 .5 13 .5H85Q87 .5 88 3L99 28.500" fill="none" stroke="#999" />
                    {!active && <path d="M0 28.500h99" stroke="#a0a0a0" />}
                  </TabShape>
                  <Favicon kind={kind} />
                  <TabTitle>{title}</TabTitle>
                  <button aria-label="Close tab"><CloseX /></button>
                </Tab>
              );
            })}
            <NewTab aria-label="New tab">
              <svg width="34" height="17" viewBox="0 0 34 17" fill="#d6d6d6" stroke="#999"><path d="M2 .5h23.500q2 0 3 2l4.500 12q.5 2-1.500 2H9q-2 0-3-2L.8 2.500Q.5.500 2 .5z" /></svg>
            </NewTab>
            <ProfileButton>Agung</ProfileButton>
          </TabStrip>
          <AddressRow>
            <NavButtons>
              <button aria-label="Back"><svg width="16" height="16" viewBox="0 0 16 16" fill="none" stroke="#d0d0d0" strokeWidth="2"><path d="M15 8H2M8 2L2 8l6 6" /></svg></button>
              <button aria-label="Forward"><svg width="16" height="16" viewBox="0 0 16 16" fill="none" stroke="#d0d0d0" strokeWidth="2"><path d="M1 8h13M8 2l6 6-6 6" /></svg></button>
              <button aria-label="Reload"><svg width="16" height="16" viewBox="0 0 16 16" fill="none" stroke="#5a5a5a" strokeWidth="2"><path d="M13.500 10A6 6 0 1 1 12.500 4" /><path d="M15 1v6.500H8.500z" fill="#5a5a5a" stroke="none" /></svg></button>
              <button aria-label="Home"><svg width="16" height="16" viewBox="0 0 16 16" fill="none" stroke="#5a5a5a" strokeWidth="2"><path d="M.8 9L8 1.800 15.200 9M3 8v7h10V8" /></svg></button>
            </NavButtons>
            <AddressBox>
              <svg width="15" height="15" viewBox="0 0 15 15" fill="none" stroke="#5a5a5a" strokeWidth="1.500"><circle cx="7.500" cy="7.500" r="6.500" /><path d="M7.500 6.500v5M7.500 3.500v1.700" strokeWidth="1.800" /></svg>
              <Address><Host>103.247.11.52</Host>:2082/cpsess1857205160/frontend/paper_lantern/filemanager/index.html</Address>
              <button aria-label="Bookmark this page"><svg width="14" height="14" viewBox="0 0 14 14" fill="none" stroke="#5a5a5a" strokeWidth="1.300"><path d="M7 1.300l1.600 3.800 4.200.4-3.200 2.700 1 4.100L7 10.100l-3.600 2.200 1-4.100L1.200 5.500l4.200-.4z" /></svg></button>
            </AddressBox>
            <Extensions>
              <button aria-label="Ghost"><svg width="16" height="16" viewBox="0 0 16 16"><path d="M4.500 1q3-1.500 6.500 0 4 2.500 2.500 7l-2 3-.5 4.500H7L6.500 13H4.500L3.500 10 1.500 8.500 2.500 5Q2.500 2.500 4.500 1z" fill="#b4b4b4" /><path d="M5 6q0-3 3-3t3 3-3 3.500M6 11l4-1M8 5.500v2" stroke="#8a8a8a" fill="none" /></svg></button>
              <button aria-label="Contrast"><svg width="16" height="16" viewBox="0 0 16 16"><circle cx="8" cy="8" r="7.500" fill="#dcdcdc" /><path d="M8 .5v15a7.500 7.500 0 0 1 0-15z" fill="#222" /></svg></button>
              <button aria-label="X"><svg width="16" height="16" viewBox="0 0 16 16" fill="none" stroke="#555"><path d="M3 1q2 0 2.500 2l3.500 9q.8 2.500 3 2.500" strokeWidth="3" /><path d="M14 .5L2 15.500" strokeWidth="1.800" /></svg></button>
              <button aria-label="Colour picker"><svg width="22" height="22" viewBox="0 0 22 22"><path d="M1 16l8-8 2.500 2.500-8 8-3 .5z" fill="#ddd" stroke="#777" /><path d="M2 16.500l4-4 1.500 1.500-4 4z" fill="#d33" /><path d="M8 6.500l2-1 2-3 3.500 2.500-2 3-1.500 2.500z" fill="#333" /><rect x="11" y="11" width="11" height="11" rx="1" fill="#db1f26" /><path d="M16 17h1.500v1.500H16z" fill="#fff" /></svg></button>
              <button aria-label="Menu"><svg width="8" height="16" viewBox="0 0 8 16" fill="#5a5a5a"><circle cx="4" cy="3" r="1.600" /><circle cx="4" cy="8" r="1.600" /><circle cx="4" cy="13" r="1.600" /></svg></button>
            </Extensions>
          </AddressRow>
          <Bookmarks>
            <Bookmark href="#apps" $w={72}>
              <svg width="15" height="14" viewBox="0 0 15 14">
                {["#ea4335", "#ea4335", "#ea4335", "#34a853", "#4285f4", "#fbbc05", "#34a853", "#fbbc05", "#fbbc05"].map((c, i) => (
                  <rect key={i} x={1 + (i % 3) * 5} y={Math.floor(i / 3) * 5} width="3" height="3" fill={c} />
                ))}
              </svg>
              <span>Apps</span>
            </Bookmark>
            {bookmarks.map(([label, w, f]) => (
              <Bookmark key={label} href="#bookmark" $w={w} $fade={f}><GreyFolder /><span>{label}</span></Bookmark>
            ))}
            <Bookmark href="#view" $w={110}><FcGoogle size={15} /><span>View image</span></Bookmark>
            <BookmarkEnd>
              <button aria-label="More bookmarks">»</button>
              <BookmarkDivider />
              <Bookmark href="#other" $w={145}><GreyFolder /><span>Other bookmarks</span></Bookmark>
            </BookmarkEnd>
          </Bookmarks>
          <Page>
            <TopBar>
              <CpLogo width={30} height={20} color="#fff" />
              <Title>File Manager</Title>
              <SearchForm onSubmit={(e) => e.preventDefault()}>
                <label htmlFor="scope">Search</label>
                <SelectWrap>
                  <Select id="scope"><option>All Your Files</option></Select>
                  <svg width="7" height="7" viewBox="0 0 7 7" fill="#444" pointerEvents="none"><path d="M0 0h7L3.500 7z" /></svg>
                </SelectWrap>
                <label htmlFor="query">for</label>
                <SearchInput id="query" />
                <Button $primary>Go</Button>
              </SearchForm>
              <Settings><Icon name="cog" />Settings</Settings>
            </TopBar>
            <ToolBar>{renderTools(tools)}</ToolBar>
            <PathRow>
              <PathForm onSubmit={(e) => e.preventDefault()}>
                <PathHome type="button" aria-label="Home directory"><Icon name="home" /></PathHome>
                <PathInput aria-label="Path" defaultValue="public_html" />
                <PathGo>Go</PathGo>
              </PathForm>
              {renderTools(actions, true)}
            </PathRow>
            <Columns>
              <FileTree />
              <FileList />
            </Columns>
          </Page>
        </Browser>
      </Workspace>
    </Desktop>
  );
}
